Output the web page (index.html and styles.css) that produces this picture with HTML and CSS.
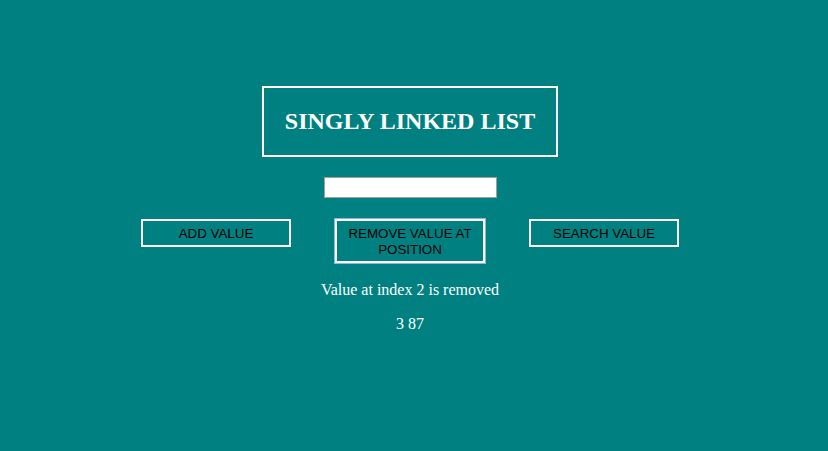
FILE: index.html
```html
<!DOCTYPE html>
<html>
<head>
<meta charset="utf-8">
<link rel="stylesheet" href="styles.css">
</head>
<body>
<div class="page">
  <h1 class="title">SINGLY LINKED LIST</h1>
  <input class="field" type="text">
  <div class="actions">
    <button class="btn">ADD VALUE</button>
    <button class="btn btn-focus">REMOVE VALUE AT POSITION</button>
    <button class="btn">SEARCH VALUE</button>
  </div>
  <p class="message">Value at index 2 is removed</p>
  <p class="list">3 87</p>
</div>
</body>
</html>
```
FILE: styles.css
```css
html, body {
  margin: 0;
  padding: 0;
  background: #008080;
  height: 100%;
}
.page {
  width: 820px;
  padding-top: 86px;
  display: flex;
  flex-direction: column;
  align-items: center;
  font-family: "Liberation Serif", "Times New Roman", serif;
  color: #fff;
}
.title {
  box-sizing: border-box;
  width: 296px;
  height: 71px;
  margin: 0;
  border: 2px solid #fff;
  display: flex;
  align-items: center;
  justify-content: center;
  font-size: 24px;
  font-weight: bold;
}
.field {
  box-sizing: border-box;
  width: 173px;
  height: 21px;
  margin: 20px 0 0;
  padding: 0;
  border: 1px solid #a0a0a0;
  background: #fff;
}
.actions {
  display: flex;
  align-items: flex-start;
  gap: 44px;
  margin-top: 21px;
}
.btn {
  box-sizing: border-box;
  width: 150px;
  min-height: 28px;
  padding: 5px 8px 3px;
  background: transparent;
  border: 2px solid #fff;
  color: #000;
  font-family: "Liberation Sans", Arial, sans-serif;
  font-size: 13.333px;
  line-height: 16px;
}
.btn-focus {
  outline: 1px solid #8ab4f0;
  outline-offset: 0;
}
.message {
  margin: 18px 0 0;
  font-size: 16px;
  line-height: 18px;
}
.list {
  margin: 16px 0 0;
  font-size: 16px;
  line-height: 18px;
}
```
